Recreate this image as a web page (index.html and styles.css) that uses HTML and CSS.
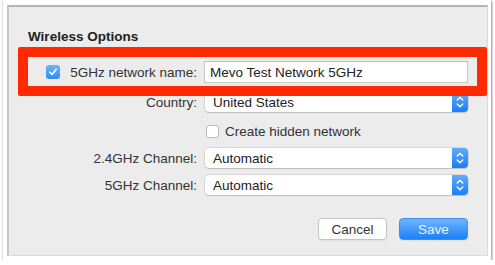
FILE: index.html
```html
<!DOCTYPE html>
<html lang="en">
<head>
    <meta charset="UTF-8">
    <meta name="viewport" content="width=device-width, initial-scale=1.0">
    <title>Wireless Options</title>
    <link rel="stylesheet" href="styles.css">
</head>
<body>
    <div class="shot">
        <div class="sheet">
            <h2 class="section-title">Wireless Options</h2>

            <div class="row row-name">
                <div class="label-cell">
                    <span class="check checked">
                        <svg width="10" height="10" viewBox="0 0 10 10"><path d="M1.8 5.2 L4 7.4 L8.3 2.3" fill="none" stroke="#fff" stroke-width="1.6" stroke-linecap="round" stroke-linejoin="round"/></svg>
                    </span>
                    <label for="networkName">5GHz network name:</label>
                </div>
                <input type="text" id="networkName" class="text-field" value="Mevo Test Network 5GHz">
            </div>

            <div class="row row-country">
                <div class="label-cell"><label>Country:</label></div>
                <div class="popup">
                    <span class="popup-value">United States</span>
                    <span class="stepper">
                        <svg width="8" height="14" viewBox="0 0 8 14"><path d="M1.2 5 L4 2.2 L6.8 5 M1.2 9 L4 11.8 L6.8 9" fill="none" stroke="#fff" stroke-width="1.3" stroke-linecap="round" stroke-linejoin="round"/></svg>
                    </span>
                </div>
            </div>

            <div class="row row-hidden">
                <div class="label-cell"></div>
                <div class="check-line">
                    <span class="check"></span>
                    <label>Create hidden network</label>
                </div>
            </div>

            <div class="row row-channel">
                <div class="label-cell"><label>2.4GHz Channel:</label></div>
                <div class="popup">
                    <span class="popup-value">Automatic</span>
                    <span class="stepper">
                        <svg width="8" height="14" viewBox="0 0 8 14"><path d="M1.2 5 L4 2.2 L6.8 5 M1.2 9 L4 11.8 L6.8 9" fill="none" stroke="#fff" stroke-width="1.3" stroke-linecap="round" stroke-linejoin="round"/></svg>
                    </span>
                </div>
            </div>

            <div class="row row-channel">
                <div class="label-cell"><label>5GHz Channel:</label></div>
                <div class="popup">
                    <span class="popup-value">Automatic</span>
                    <span class="stepper">
                        <svg width="8" height="14" viewBox="0 0 8 14"><path d="M1.2 5 L4 2.2 L6.8 5 M1.2 9 L4 11.8 L6.8 9" fill="none" stroke="#fff" stroke-width="1.3" stroke-linecap="round" stroke-linejoin="round"/></svg>
                    </span>
                </div>
            </div>

            <div class="buttons">
                <button class="btn">Cancel</button>
                <button class="btn btn-primary">Save</button>
            </div>
        </div>

        <!-- red highlight drawn over the first row -->
        <div class="callout"></div>
    </div>
</body>
</html>
```

FILE: styles.css
```css
body {
    margin: 0;
    background-color: white;
    font-family: "Liberation Sans", Arial, sans-serif;
    font-size: 13.5px;
    color: #2b2b2b;
}
.shot {
    position: relative;
    margin-left: 2px;
    width: 489px;
    height: 260px;
    box-sizing: border-box;
    padding: 5px 3px 4px 4px;
    background-color: white;
    border-left: 1px solid #e2e2e2;
    box-shadow: 1px 1px 2px rgba(0, 0, 0, 0.45);
}
.sheet {
    height: 100%;
    box-sizing: border-box;
    padding: 22px 0 0 19px;
    background-color: #ececec;
    border-top: 2px solid #b4b4b4;
    border-left: 2px solid #c6c6c6;
    border-right: 1px solid #dadada;
    border-bottom: 1px solid #dadada;
}
.section-title {
    margin: 0;
    font-size: 13.5px;
    line-height: 16px;
    font-weight: bold;
    color: #222;
}
.row {
    display: grid;
    grid-template-columns: 169px 263px;
    column-gap: 8px;
    align-items: center;
    height: 24px;
}
.row-name {
    margin-top: 15px;
}
.row-country {
    margin-top: 6px;
}
.row-hidden {
    margin-top: 5px;
}
.row-channel {
    margin-top: 3px;
}
.label-cell {
    display: flex;
    align-items: center;
    justify-content: flex-end;
    gap: 10px;
    color: #333;
}
.check {
    display: inline-flex;
    align-items: center;
    justify-content: center;
    width: 13px;
    height: 13px;
    box-sizing: border-box;
    border: 1px solid #b9b9b9;
    border-radius: 3px;
    background-color: white;
}
.check.checked {
    width: 14px;
    height: 14px;
    border: none;
    background: linear-gradient(#6cb4fb, #2f8cf8);
}
.text-field {
    height: 22px;
    box-sizing: border-box;
    margin: 0 0 0 -1px;
    padding: 0 5px;
    border: 1px solid #c8c8c8;
    border-top-color: #bdbdbd;
    background-color: white;
    font-family: inherit;
    font-size: 13.5px;
    color: #222;
    outline: none;
}
.popup {
    display: flex;
    align-items: center;
    height: 20px;
    box-sizing: border-box;
    border-radius: 4px;
    background-color: white;
    box-shadow: 0 0 0 0.5px rgba(0, 0, 0, 0.18), 0 1px 1px rgba(0, 0, 0, 0.12);
    overflow: hidden;
}
.popup-value {
    flex: 1;
    padding-left: 8px;
    color: #222;
}
.stepper {
    display: flex;
    align-items: center;
    justify-content: center;
    width: 16px;
    height: 100%;
    background: linear-gradient(#5eacfb, #1c7ff6);
}
.check-line {
    display: flex;
    align-items: center;
    gap: 6px;
    padding-left: 1px;
    color: #333;
}
.buttons {
    display: flex;
    justify-content: flex-end;
    gap: 12px;
    width: 440px;
    margin-top: 21px;
}
.btn {
    width: 69px;
    height: 22px;
    padding: 0;
    border: 1px solid #c4c4c4;
    border-radius: 4px;
    background-color: white;
    font-family: inherit;
    font-size: 13.5px;
    color: #333;
    box-shadow: 0 1px 1px rgba(0, 0, 0, 0.06);
}
.btn-primary {
    border-color: #3f8ef2;
    background: linear-gradient(#6fb5fb, #1b80f7);
    color: #e9f3ff;
}
.callout {
    position: absolute;
    left: 15px;
    top: 47px;
    width: 469px;
    height: 49px;
    box-sizing: border-box;
    border: 10px solid #ff2a00;
    border-radius: 2px;
}
```
